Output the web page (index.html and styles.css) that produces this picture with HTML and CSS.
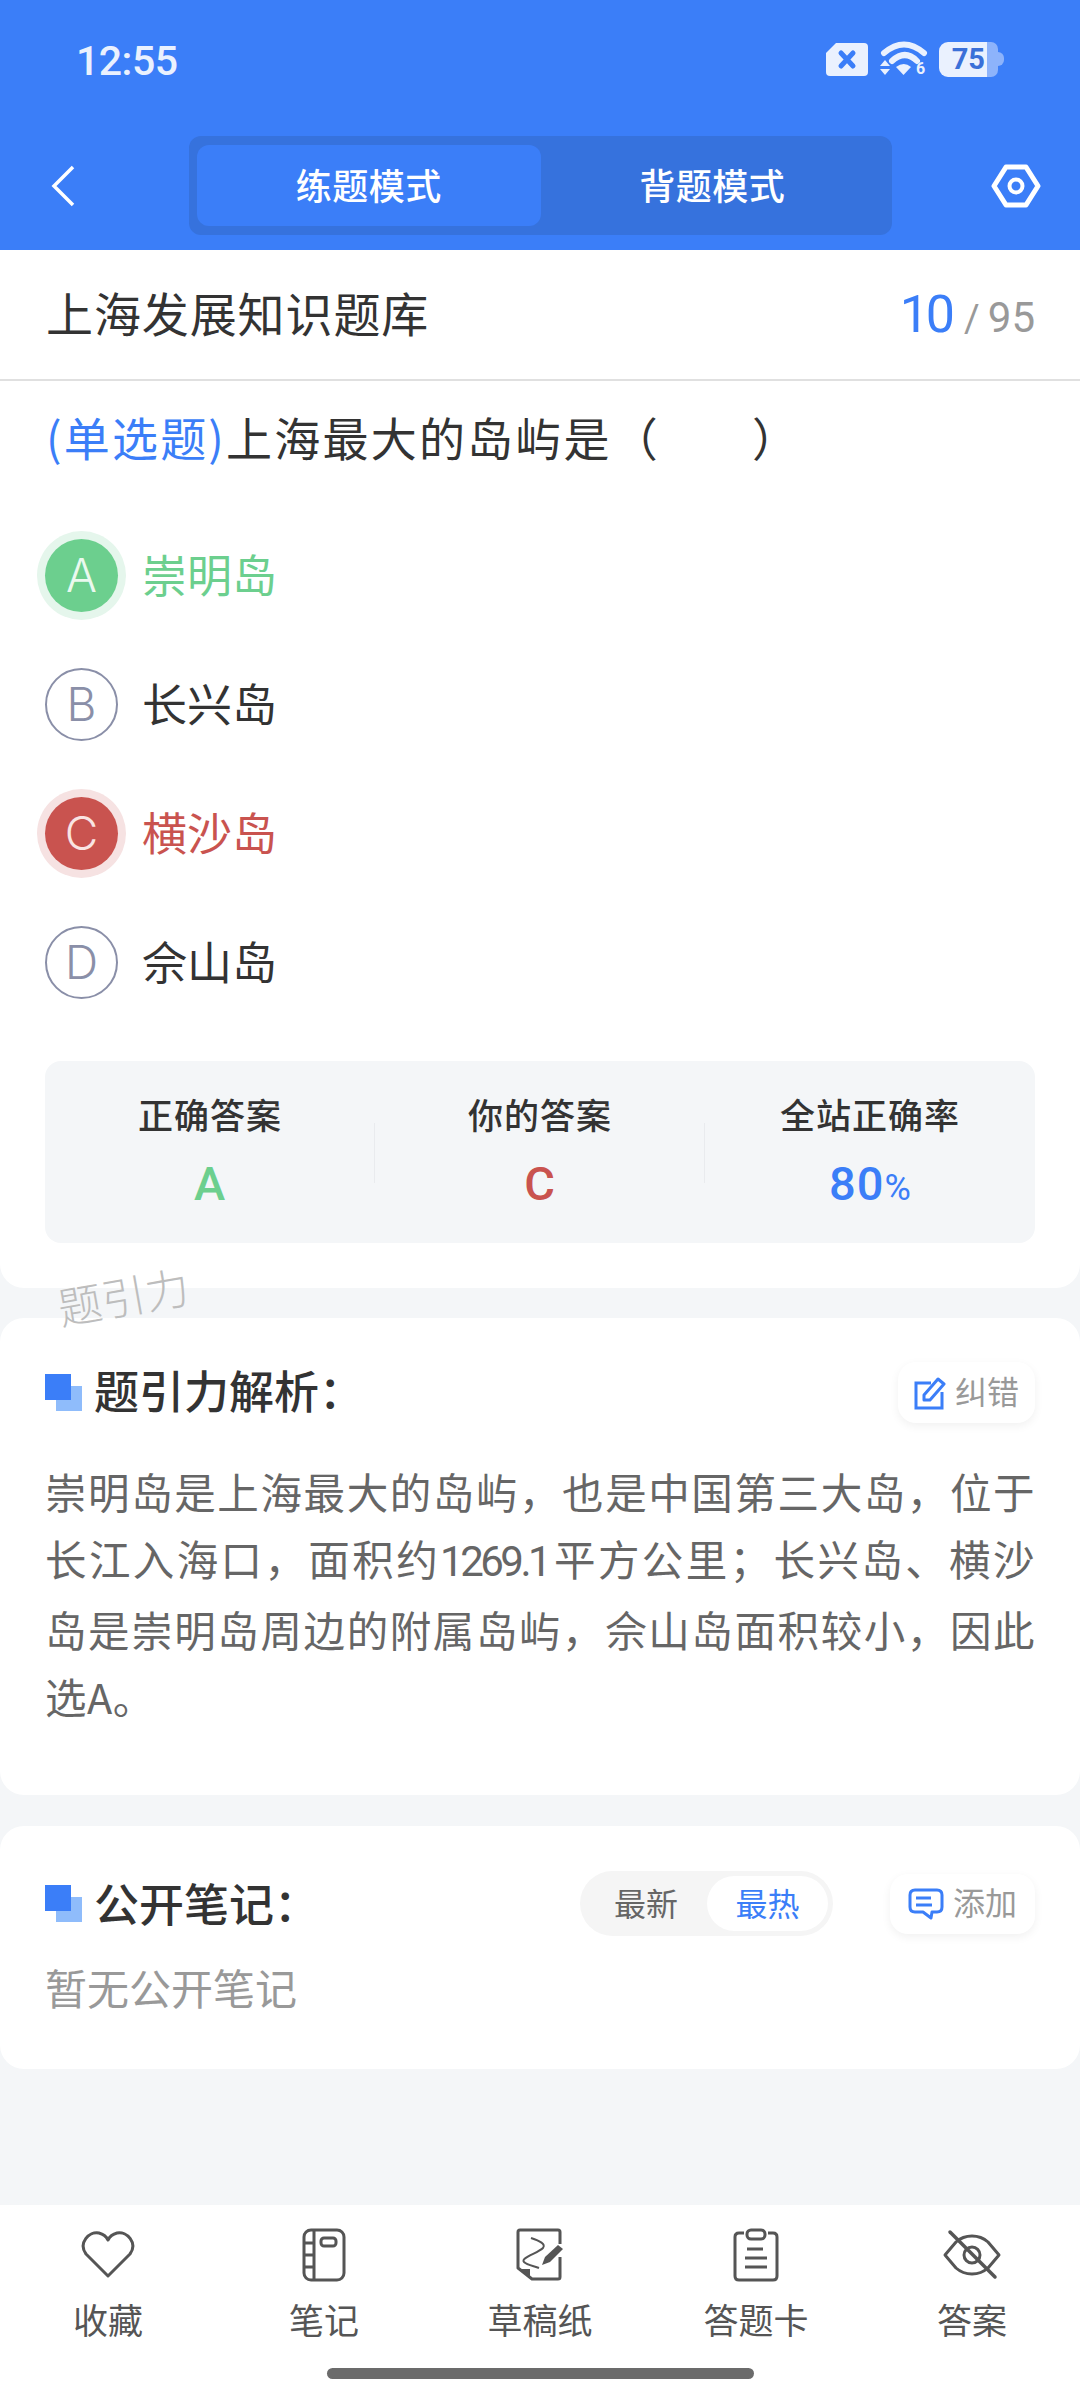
FILE: index.html
```html
<!DOCTYPE html>
<html lang="zh">
<head>
<meta charset="UTF-8">
<title>上海发展知识题库</title>
<link rel="stylesheet" href="styles.css">
</head>
<body>

<div class="top">
	<div class="status">
		<span class="time">12:55</span>
		<div class="status-icons">
			<svg width="44" height="35" viewBox="0 0 44 35"><path d="M11 1H39Q43 1 43 5V30Q43 34 39 34H5Q1 34 1 30V11Z" fill="#eaf1fe"/><path d="M16 11L28 24M28 11L16 24" stroke="#3b7ef8" stroke-width="5" stroke-linecap="round"/></svg>
			<svg class="wifi" width="48" height="36" viewBox="0 0 48 36"><path d="M4 12Q24 -5 44 12" fill="none" stroke="#eaf1fe" stroke-width="6" stroke-linecap="round"/><path d="M12 20Q25 8 37 20" fill="none" stroke="#eaf1fe" stroke-width="6" stroke-linecap="round"/><path d="M16 26Q24 20 31 26L23.500 34Z" fill="#eaf1fe"/><path d="M0 25L5 19L10 25ZM0 28L10 28L5 34Z" fill="#eaf1fe"/><text x="36" y="33" class="wifi-six">6</text></svg>
			<div class="battery"><span class="battery-num">75</span><span class="battery-rest"></span></div>
		</div>
	</div>
	<div class="nav">
		<svg class="back" width="26" height="42" viewBox="0 0 26 42"><path d="M23 2L4 21L23 40" fill="none" stroke="#fff" stroke-width="3.500"/></svg>
		<div class="tabs">
			<div class="tab tab-on">练题模式</div>
			<div class="tab">背题模式</div>
		</div>
		<svg class="gear" width="50" height="46" viewBox="0 0 50 46"><path d="M15 4H35L47 23L35 42H15L3 23Z" fill="none" stroke="#fff" stroke-width="5" stroke-linejoin="round"/><circle cx="25" cy="23" r="6.500" fill="none" stroke="#fff" stroke-width="4"/></svg>
	</div>
</div>

<div class="card card-main">
	<div class="bank">
		<span class="bank-name">上海发展知识题库</span>
		<span class="bank-count"><b>10</b><i>/</i>95</span>
	</div>
	<div class="question"><span class="q-type">(单选题)</span>上海最大的岛屿是（<span class="blank"></span>）</div>
	<div class="options">
		<div class="option right"><span class="letter">A</span><span class="opt-text">崇明岛</span></div>
		<div class="option"><span class="letter">B</span><span class="opt-text">长兴岛</span></div>
		<div class="option wrong"><span class="letter">C</span><span class="opt-text">横沙岛</span></div>
		<div class="option"><span class="letter">D</span><span class="opt-text">佘山岛</span></div>
	</div>
	<div class="stats">
		<div class="stat"><div class="stat-label">正确答案</div><div class="stat-val green">A</div></div>
		<div class="stat"><div class="stat-label">你的答案</div><div class="stat-val red">C</div></div>
		<div class="stat"><div class="stat-label">全站正确率</div><div class="stat-val blue">80<small>%</small></div></div>
	</div>
</div>

<div class="watermark">题引力</div>

<div class="card card-analysis">
	<div class="sec-head">
		<span class="sec-mark"></span>
		<span class="sec-title">题引力解析：</span>
		<div class="mini-btn">
			<svg width="32" height="34" viewBox="0 0 32 34"><path d="M17 7H2V32H28V16" fill="none" stroke="#3b7ef8" stroke-width="3"/><path d="M10 19L24 3L30 8L16 24H10Z" fill="none" stroke="#3b7ef8" stroke-width="3" stroke-linejoin="round"/></svg>
			<span>纠错</span>
		</div>
	</div>
	<div class="analysis">
		<div class="line">崇明岛是上海最大的岛屿，也是中国第三大岛，位于</div>
		<div class="line"><span>长江入海口，面积约</span><span class="num">1269.1</span><span>平方公里；长兴岛、横沙</span></div>
		<div class="line">岛是崇明岛周边的附属岛屿，佘山岛面积较小，因此</div>
		<div class="line line-end">选A。</div>
	</div>
</div>

<div class="card card-notes">
	<div class="sec-head">
		<span class="sec-mark"></span>
		<span class="sec-title">公开笔记：</span>
		<div class="sort">
			<span class="sort-item">最新</span>
			<span class="sort-item sort-on">最热</span>
		</div>
		<div class="mini-btn mini-add">
			<svg width="36" height="32" viewBox="0 0 36 32"><path d="M7 2H29Q34 2 34 7V19Q34 24 29 24H24L23 30L15 24H7Q2 24 2 19V7Q2 2 7 2Z" fill="none" stroke="#3b7ef8" stroke-width="3" stroke-linejoin="round"/><path d="M8 10H23M8 17H24" stroke="#3b7ef8" stroke-width="3"/></svg>
			<span>添加</span>
		</div>
	</div>
	<div class="no-notes">暂无公开笔记</div>
</div>

<div class="bottom">
	<div class="tools">
		<div class="tool">
			<svg width="54" height="50" viewBox="0 0 54 50"><path d="M27 46L5 24C-3 13 8 1 18 3C22 4 25 6 27 10C29 6 32 4 36 3C46 1 57 13 49 24Z" fill="none" stroke="#555" stroke-width="3" stroke-linejoin="round"/></svg>
			<span>收藏</span>
		</div>
		<div class="tool">
			<svg width="44" height="54" viewBox="0 0 44 54"><rect x="2" y="2" width="40" height="50" rx="7" fill="none" stroke="#555" stroke-width="3"/><path d="M12 2V52M2 15H12M2 27H12M2 39H12" stroke="#555" stroke-width="3"/><rect x="19" y="10" width="15" height="8" rx="3" fill="none" stroke="#555" stroke-width="3"/></svg>
			<span>笔记</span>
		</div>
		<div class="tool">
			<svg width="48" height="54" viewBox="0 0 48 54"><path d="M44 29V49Q44 51 42 51H16L2 40V4Q2 2 4 2H42Q44 2 44 4V16" fill="none" stroke="#555" stroke-width="3" stroke-linejoin="round"/><path d="M4 41H14V50Z" fill="#555"/><path d="M15 10C24 13 30 16 27 20C22 25 4 30 8 34C11 37 18 38 23 40" fill="none" stroke="#555" stroke-width="2"/><path d="M26 37L29 29L42 17L47 21L34 34Z" fill="#555"/></svg>
			<span>草稿纸</span>
		</div>
		<div class="tool">
			<svg width="46" height="54" viewBox="0 0 46 54"><path d="M11 5H6Q2 5 2 9V48Q2 52 6 52H40Q44 52 44 48V9Q44 5 40 5H35" fill="none" stroke="#555" stroke-width="3"/><rect x="14" y="2" width="18" height="9" rx="4" fill="none" stroke="#555" stroke-width="3"/><path d="M14 21H30M12 30H34M12 39H34" stroke="#555" stroke-width="3"/></svg>
			<span>答题卡</span>
		</div>
		<div class="tool">
			<svg width="58" height="50" viewBox="0 0 58 50"><path d="M2 25L13 12C22 4 36 4 45 12L56 25L45 38C36 46 22 46 13 38Z" fill="none" stroke="#555" stroke-width="3" stroke-linejoin="round"/><path d="M7 2L52 47" stroke="#555" stroke-width="3.500" stroke-linecap="round"/><circle cx="29" cy="25" r="8" fill="none" stroke="#555" stroke-width="3"/></svg>
			<span>答案</span>
		</div>
	</div>
	<div class="home-bar"></div>
</div>

</body>
</html>
```

FILE: styles.css
```css
* {
	box-sizing: border-box;
}

body {
	margin: 0;
	width: 1080px;
	height: 2400px;
	position: relative;
	overflow: hidden;
	background: #f4f6f8;
	color: #333;
	font-family: "Noto Sans CJK SC", Roboto, sans-serif;
	display: flex;
	flex-direction: column;
}

.top {
	height: 250px;
	background: #3b7ef8;
	color: #fff;
}

.status {
	height: 136px;
	padding: 38px 76px 0 76px;
	display: flex;
	justify-content: space-between;
	align-items: flex-start;
}

.time {
	font-family: Roboto, sans-serif;
	font-weight: 500;
	font-size: 41px;
	line-height: 46px;
	letter-spacing: -0.5px;
	color: #eaf1fe;
}

.status-icons {
	display: flex;
	align-items: center;
	gap: 11px;
	height: 46px;
	margin-top: -2px;
}

.wifi {
	overflow: visible;
}

.wifi-six {
	font-family: Roboto, sans-serif;
	font-weight: 700;
	font-size: 16px;
	fill: #eaf1fe;
}

.battery {
	display: flex;
	align-items: center;
}

.battery::after {
	content: "";
	width: 6px;
	height: 14px;
	border-radius: 0 6px 6px 0;
	background: #8db3fb;
}

.battery-num {
	width: 48px;
	height: 35px;
	border-radius: 9px 0 0 9px;
	background: #eaf1fe;
	color: #3a70d8;
	font-family: Roboto, sans-serif;
	font-weight: 700;
	font-size: 29px;
	line-height: 35px;
	text-align: right;
	padding-right: 2px;
}

.battery-rest {
	width: 11px;
	height: 35px;
	border-radius: 0 7px 7px 0;
	background: #8db3fb;
}

.nav {
	height: 99px;
	padding: 0 39px 0 50px;
	display: flex;
	align-items: center;
	justify-content: space-between;
}

.back {
	margin-right: 113px;
}

.tabs {
	width: 703px;
	height: 99px;
	background: #3672dd;
	border-radius: 12px;
	padding: 9px 8px;
	display: flex;
	margin-right: auto;
}

.tab {
	flex: 1;
	border-radius: 12px;
	font-size: 36px;
	font-weight: 500;
	line-height: 78px;
	text-align: center;
	letter-spacing: 0.5px;
}

.tab-on {
	background: #3b7ef8;
}

.card {
	background: #fff;
	border-radius: 24px;
}

.card-main {
	height: 1038px;
	border-radius: 0 0 24px 24px;
}

.bank {
	height: 131px;
	padding: 0 45px 0 46px;
	border-bottom: 2px solid #e0e0e0;
	display: flex;
	justify-content: space-between;
	align-items: center;
}

.bank-name {
	font-size: 47px;
	line-height: 60px;
	letter-spacing: 0.9px;
	margin-bottom: 5px;
}

.bank-count {
	font-family: Roboto, sans-serif;
	font-size: 42px;
	color: #999;
}

.bank-count b {
	font-weight: 400;
	font-size: 52px;
	letter-spacing: -3px;
	color: #3b7ef8;
}

.bank-count i {
	font-style: normal;
	margin: 0 8px 0 12px;
	font-size: 38px;
}

.question {
	padding: 0 46px;
	margin-top: 20px;
	height: 70px;
	font-size: 46px;
	line-height: 70px;
	letter-spacing: 2.200px;
}

.q-type {
	color: #3b7ef8;
}

.blank {
	display: inline-block;
	width: 92px;
}

.options {
	margin-top: 40px;
	padding-left: 45px;
}

.option {
	height: 129px;
	display: flex;
	align-items: center;
	font-size: 45px;
	color: #333;
}

.opt-text {
	margin-bottom: 5px;
}

.letter {
	width: 73px;
	height: 73px;
	border-radius: 50%;
	border: 2px solid #8a8fa8;
	color: #8a8fa8;
	font-family: Inter, sans-serif;
	font-weight: 300;
	font-size: 46px;
	line-height: 69px;
	text-align: center;
	margin-right: 24px;
}

.right {
	color: #6ccf8e;
}

.right .letter {
	background: #6ccf8e;
	border: 0;
	color: #eaf9ef;
	line-height: 73px;
	box-shadow: 0 0 0 8px #e5f6ec;
}

.wrong {
	color: #c9534f;
}

.wrong .letter {
	background: #c9534f;
	border: 0;
	color: #f9e4e3;
	line-height: 73px;
	box-shadow: 0 0 0 8px #f6e2e2;
}

.stats {
	margin: 34px 45px 0;
	height: 182px;
	background: #f4f6f8;
	border-radius: 16px;
	display: flex;
	align-items: center;
}

.stat {
	flex: 1;
	height: 126px;
	text-align: center;
	position: relative;
}

.stat + .stat::before {
	content: "";
	position: absolute;
	left: -1px;
	top: 34px;
	height: 60px;
	width: 1px;
	background: #e9ebee;
}

.stat-label {
	font-size: 35px;
	font-weight: 500;
	line-height: 50px;
	letter-spacing: 1px;
}

.stat-val {
	margin-top: 18px;
	font-family: Roboto, sans-serif;
	font-weight: 500;
	font-size: 47px;
	line-height: 54px;
	letter-spacing: 1px;
}

.stat-val small {
	font-size: 36px;
	font-weight: 400;
	letter-spacing: 0;
}

.green {
	color: #6ccf8e;
}

.red {
	color: #c9534f;
}

.blue {
	color: #3b7ef8;
}

.watermark {
	position: absolute;
	left: 57px;
	top: 1263px;
	font-size: 44px;
	font-weight: 300;
	color: #bdbdbd;
	transform: rotate(-10deg);
}

.card-analysis {
	margin-top: 30px;
	height: 477px;
	padding: 0 45px;
}

.sec-head {
	height: 61px;
	margin-top: 44px;
	display: flex;
	align-items: center;
}

.sec-mark {
	width: 37px;
	height: 37px;
	position: relative;
	margin-right: 12px;
	flex: none;
}

.sec-mark::before,
.sec-mark::after {
	content: "";
	position: absolute;
	width: 26px;
}

.sec-mark::before {
	left: 11px;
	top: 12px;
	height: 25px;
	background: #8fbcfb;
}

.sec-mark::after {
	left: 0;
	top: 0;
	height: 26px;
	background: #3b7ef8;
}

.sec-title {
	font-size: 45px;
	font-weight: 500;
	margin-right: auto;
	margin-bottom: 6px;
}

.mini-btn {
	width: 137px;
	height: 61px;
	border-radius: 18px;
	background: #fff;
	box-shadow: 0 3px 10px rgba(0, 0, 0, 0.06);
	display: flex;
	align-items: center;
	justify-content: center;
	gap: 9px;
	font-size: 32px;
	color: #999;
}

.mini-btn span {
	margin-bottom: 6px;
}

.analysis {
	margin-top: 35px;
	font-size: 41.500px;
	line-height: 67.300px;
	letter-spacing: 0.500px;
	color: #666;
}

.line {
	text-align: justify;
	text-align-last: justify;
}

.line-end {
	text-align-last: left;
}

.num {
	font-family: Roboto, sans-serif;
	font-size: 42px;
	letter-spacing: -3.500px;
	margin-right: 4px;
}

.card-notes {
	margin-top: 31px;
	height: 243px;
	padding: 0 45px;
}

.card-notes .sec-head {
	margin-top: 45px;
	height: 65px;
}

.card-notes .sec-title {
	margin-bottom: 3px;
}

.sort {
	width: 253px;
	height: 65px;
	border-radius: 33px;
	background: #f5f5f5;
	padding: 5px;
	display: flex;
	font-size: 32px;
	color: #666;
	margin-right: 57px;
}

.sort-item {
	flex: 1;
	line-height: 53px;
	text-align: center;
	border-radius: 28px;
}

.sort-on {
	background: #fff;
	color: #3b7ef8;
	flex: none;
	width: 121px;
}

.mini-add {
	width: 145px;
	height: 60px;
}

.no-notes {
	margin-top: 21px;
	font-size: 42px;
	line-height: 60px;
	color: #999;
}

.bottom {
	position: absolute;
	left: 0;
	top: 2205px;
	width: 1080px;
	height: 195px;
	background: #fff;
}

.tools {
	display: flex;
	padding-top: 22px;
}

.tool {
	flex: 1;
	display: flex;
	flex-direction: column;
	align-items: center;
	font-size: 35px;
	color: #555;
}

.tool svg {
	height: 56px;
}

.tool span {
	margin-top: 11px;
	line-height: 50px;
}

.home-bar {
	position: absolute;
	left: 327px;
	top: 163px;
	width: 427px;
	height: 11px;
	border-radius: 6px;
	background: #6b6b6b;
}
```
